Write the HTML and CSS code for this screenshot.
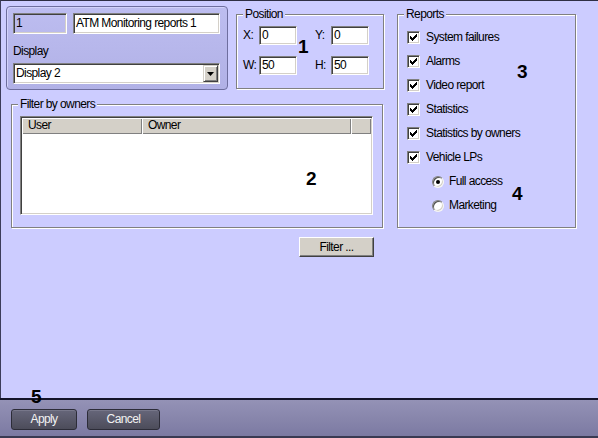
FILE: index.html
```html
<!DOCTYPE html>
<html>
<head>
<meta charset="utf-8">
<title>ATM Monitoring reports</title>
<link rel="stylesheet" href="styles.css">
</head>
<body>
<div class="window">
  <div class="main">
    <div class="left">
      <div class="toprow">
        <div class="panel">
          <div class="row">
            <div class="input id">1</div>
            <div class="input name">ATM Monitoring reports 1</div>
          </div>
          <div class="label">Display</div>
          <div class="select">
            <span class="select-text">Display 2</span>
            <span class="drop"><svg width="7" height="4" viewBox="0 0 7 4"><polygon points="0,0 7,0 3.5,4" fill="#000"/></svg></span>
          </div>
        </div>
        <div class="group position">
          <span class="group-title">Position</span>
          <div class="coords">
            <div class="pair"><span class="coord-label">X:</span><span class="input coord">0</span></div>
            <div class="pair"><span class="coord-label">Y:</span><span class="input coord">0</span></div>
            <div class="pair"><span class="coord-label">W:</span><span class="input coord">50</span></div>
            <div class="pair"><span class="coord-label">H:</span><span class="input coord">50</span></div>
          </div>
        </div>
      </div>
      <div class="group owners">
        <span class="group-title">Filter by owners</span>
        <div class="list">
          <div class="list-head">
            <span class="col col-user">User</span>
            <span class="col col-owner">Owner</span>
            <span class="col col-extra"></span>
          </div>
          <div class="list-body"></div>
        </div>
      </div>
      <button class="btn filter">Filter ...</button>
    </div>
    <div class="group reports">
      <span class="group-title">Reports</span>
      <div class="check"><span class="box"><svg width="7" height="7" viewBox="0 0 7 7"><path d="M0 2h1v3h-1zM1 3h1v3h-1zM2 4h1v3h-1zM3 3h1v3h-1zM4 2h1v3h-1zM5 1h1v3h-1zM6 0h1v3h-1z" fill="#000"/></svg></span><span>System failures</span></div>
      <div class="check"><span class="box"><svg width="7" height="7" viewBox="0 0 7 7"><path d="M0 2h1v3h-1zM1 3h1v3h-1zM2 4h1v3h-1zM3 3h1v3h-1zM4 2h1v3h-1zM5 1h1v3h-1zM6 0h1v3h-1z" fill="#000"/></svg></span><span>Alarms</span></div>
      <div class="check"><span class="box"><svg width="7" height="7" viewBox="0 0 7 7"><path d="M0 2h1v3h-1zM1 3h1v3h-1zM2 4h1v3h-1zM3 3h1v3h-1zM4 2h1v3h-1zM5 1h1v3h-1zM6 0h1v3h-1z" fill="#000"/></svg></span><span>Video report</span></div>
      <div class="check"><span class="box"><svg width="7" height="7" viewBox="0 0 7 7"><path d="M0 2h1v3h-1zM1 3h1v3h-1zM2 4h1v3h-1zM3 3h1v3h-1zM4 2h1v3h-1zM5 1h1v3h-1zM6 0h1v3h-1z" fill="#000"/></svg></span><span>Statistics</span></div>
      <div class="check"><span class="box"><svg width="7" height="7" viewBox="0 0 7 7"><path d="M0 2h1v3h-1zM1 3h1v3h-1zM2 4h1v3h-1zM3 3h1v3h-1zM4 2h1v3h-1zM5 1h1v3h-1zM6 0h1v3h-1z" fill="#000"/></svg></span><span>Statistics by owners</span></div>
      <div class="check"><span class="box"><svg width="7" height="7" viewBox="0 0 7 7"><path d="M0 2h1v3h-1zM1 3h1v3h-1zM2 4h1v3h-1zM3 3h1v3h-1zM4 2h1v3h-1zM5 1h1v3h-1zM6 0h1v3h-1z" fill="#000"/></svg></span><span>Vehicle LPs</span></div>
      <div class="radio-row"><span class="radio checked"></span><span>Full access</span></div>
      <div class="radio-row"><span class="radio"></span><span>Marketing</span></div>
    </div>
  </div>
  <div class="footer">
    <button class="dark-btn apply">Apply</button>
    <button class="dark-btn cancel">Cancel</button>
  </div>
  <span class="callout c1">1</span>
  <span class="callout c2">2</span>
  <span class="callout c3">3</span>
  <span class="callout c4">4</span>
  <span class="callout c5">5</span>
</div>
</body>
</html>
```

FILE: styles.css
```css
* { box-sizing: border-box; }
html, body { margin: 0; padding: 0; }
body {
  width: 598px;
  height: 438px;
  overflow: hidden;
  background: #ccccff;
  font-family: "Liberation Sans", Arial, sans-serif;
  font-size: 12px;
  letter-spacing: -0.6px;
  line-height: 13px;
  color: #000;
}
.window {
  position: relative;
  width: 598px;
  height: 438px;
  display: flex;
  flex-direction: column;
}
.main {
  height: 398px;
  flex: none;
  display: flex;
  align-items: flex-start;
  gap: 13px;
  padding: 5px 0 0 5px;
  border-top: 1px solid #2e2e44;
  border-left: 1px solid #3c3c5a;
  background: #ccccff;
}
.left {
  width: 378px;
  flex: none;
  display: flex;
  flex-direction: column;
}
.toprow {
  display: flex;
  align-items: flex-start;
  gap: 8px;
}
.panel {
  width: 222px;
  height: 84px;
  flex: none;
  border: 1px solid #6e6e9e;
  border-radius: 4px;
  background: linear-gradient(#bdbdf0, #b1b1e6);
  box-shadow: inset 1px 1px 0 #d2d2fa;
  padding: 6px 0 0 6px;
}
.row { display: flex; gap: 6px; }
.input {
  display: block;
  height: 21px;
  background: #fff;
  border: 1px solid;
  border-color: #808080 #fff #fff #808080;
  box-shadow: inset 1px 1px 0 #404040, inset -1px -1px 0 #d4d0c8;
  padding: 0 2px;
  line-height: 19px;
  white-space: nowrap;
  overflow: hidden;
}
.input.id { width: 54px; background: transparent; }
.input.name { width: 147px; }
.label { margin-top: 11px; }
.select {
  margin-top: 5px;
  width: 207px;
  height: 21px;
  display: flex;
  background: #fff;
  border: 1px solid;
  border-color: #808080 #fff #fff #808080;
  box-shadow: inset 1px 1px 0 #404040, inset -1px -1px 0 #d4d0c8;
  padding: 1px;
}
.select-text { flex: 1; line-height: 17px; padding-left: 1px; }
.drop {
  width: 15px;
  height: 17px;
  display: flex;
  align-items: center;
  justify-content: center;
  background: #d4d0c8;
  border: 1px solid;
  border-color: #d4d0c8 #404040 #404040 #d4d0c8;
  box-shadow: inset 1px 1px 0 #fff, inset -1px -1px 0 #808080;
}
.drop svg { display: block; }

.group {
  position: relative;
  flex: none;
  border: 1px solid #808080;
  box-shadow: 1px 1px 0 #fff, inset 1px 1px 0 #fff;
}
.group-title {
  position: absolute;
  top: -7px;
  left: 6px;
  padding: 0 2px;
  background: #ccccff;
  white-space: nowrap;
}
.position {
  width: 148px;
  height: 75px;
  margin-top: 8px;
  padding: 11px 0 0 6px;
}
.coords {
  display: grid;
  grid-template-columns: auto auto;
  justify-content: start;
  column-gap: 18px;
  row-gap: 11px;
}
.pair { display: flex; align-items: center; }
.coord-label { width: 16px; }
.input.coord {
  width: 38px;
  height: 19px;
  line-height: 17px;
  padding: 0 1px 0 2px;
}

.owners {
  width: 372px;
  height: 124px;
  margin: 14px 0 0 5px;
  padding: 11px 0 0 8px;
}
.list {
  width: 353px;
  height: 99px;
  background: #fff;
  border: 1px solid;
  border-color: #808080 #fff #fff #808080;
  box-shadow: inset 1px 1px 0 #404040, inset -1px -1px 0 #d4d0c8;
  padding: 1px;
}
.list-head { display: flex; height: 16px; }
.col {
  height: 16px;
  background: #d4d0c8;
  box-shadow: inset 1px 1px 0 #fff, inset -1px -1px 0 #808080;
  padding: 0 0 0 6px;
  line-height: 15px;
}
.col-user { width: 120px; }
.col-owner { width: 209px; }
.col-extra { width: 20px; }

.btn {
  font: inherit;
  letter-spacing: inherit;
  color: #000;
  background: #d4d0c8;
  border: 1px solid;
  border-color: #fff #404040 #404040 #fff;
  box-shadow: inset -1px -1px 0 #808080;
  padding: 0;
}
.filter {
  align-self: flex-end;
  width: 75px;
  height: 20px;
  margin: 9px 10px 0 0;
}

.reports {
  width: 179px;
  height: 214px;
  margin-top: 8px;
  padding: 16px 0 0 9px;
  display: flex;
  flex-direction: column;
  gap: 11px;
}
.check, .radio-row {
  display: flex;
  align-items: center;
  height: 13px;
  white-space: nowrap;
}
.check { gap: 6px; }
.box {
  width: 13px;
  height: 13px;
  flex: none;
  background: #fff;
  border: 1px solid;
  border-color: #808080 #fff #fff #808080;
  box-shadow: inset 1px 1px 0 #404040, inset -1px -1px 0 #d4d0c8;
}
.box svg { display: block; margin: 2px 0 0 2px; shape-rendering: crispEdges; }
.radio-row { margin-left: 25px; gap: 5px; }
.radio {
  width: 12px;
  height: 12px;
  flex: none;
  border-radius: 50%;
  background: #fff;
  border: 1px solid;
  border-color: #808080 #f4f4f4 #f4f4f4 #808080;
  box-shadow: inset 1px 1px 0 #505050, inset -1px -1px 0 #d4d0c8;
  display: flex;
  align-items: center;
  justify-content: center;
}
.radio.checked::after {
  content: "";
  width: 4px;
  height: 4px;
  border-radius: 50%;
  background: #000;
}

.footer {
  height: 40px;
  flex: none;
  display: flex;
  gap: 10px;
  padding: 9px 0 0 11px;
  border-top: 2px solid #14142a;
  border-bottom: 2px solid #3a3a52;
  background: linear-gradient(#9492b6, #7c7aa2);
}
.dark-btn {
  font: inherit;
  letter-spacing: inherit;
  height: 21px;
  padding: 0;
  border: 1px solid #2c2c38;
  border-radius: 3px;
  background: linear-gradient(#66667a, #4c4c5a);
  box-shadow: inset 0 1px 0 #77778a;
  color: #f2f2f2;
}
.apply { width: 66px; }
.cancel { width: 73px; }

.callout {
  position: absolute;
  font-family: "Liberation Sans", Arial, sans-serif;
  font-weight: bold;
  font-size: 19px;
  line-height: 19px;
  letter-spacing: 0;
  color: #000;
}
.c1 { left: 298px; top: 37px; }
.c2 { left: 306px; top: 169px; }
.c3 { left: 517px; top: 62px; }
.c4 { left: 512px; top: 184px; }
.c5 { left: 31px; top: 387px; }
```
